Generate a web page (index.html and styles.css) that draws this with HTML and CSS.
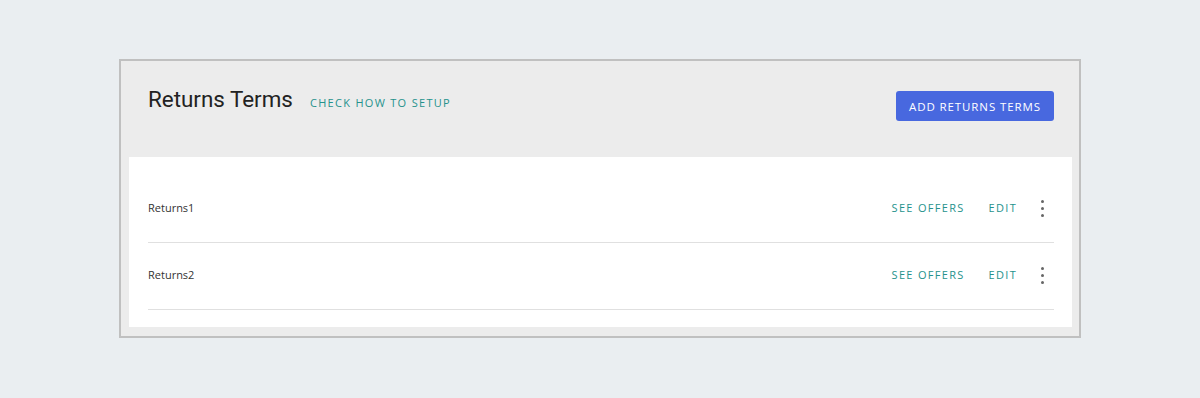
FILE: index.html
```html
<!DOCTYPE html>
<html>
<head>
	<title>Returns Terms</title>
	<meta charset="utf8"/>
	<link rel="stylesheet" href="styles.css">
</head>
<body>
	<div class="panel">
		<div class="panel-header">
			<div class="heading">
				<h1>Returns Terms</h1>
				<a class="link" href="#">Check how to setup</a>
			</div>
			<button class="primary">Add returns terms</button>
		</div>
		<ul class="terms">
			<li class="term">
				<span class="term-name">Returns1</span>
				<div class="actions">
					<a class="link" href="#">See offers</a>
					<a class="link" href="#">Edit</a>
					<span class="more"><i></i><i></i><i></i></span>
				</div>
			</li>
			<li class="term">
				<span class="term-name">Returns2</span>
				<div class="actions">
					<a class="link" href="#">See offers</a>
					<a class="link" href="#">Edit</a>
					<span class="more"><i></i><i></i><i></i></span>
				</div>
			</li>
		</ul>
	</div>
</body>
</html>
```

FILE: styles.css
```css
body {
	background: #eaeef1;
	font-family: "Open Sans", sans-serif;
	margin: 0;
}

.panel {
	background: #ececec;
	border: 2px solid #c0c0c0;
	margin: 59px auto 0;
	width: 958px;
}

.panel-header {
	align-items: flex-start;
	box-sizing: border-box;
	display: flex;
	height: 96px;
	justify-content: space-between;
	padding: 0 25px 0 27px;
}

.heading {
	align-items: baseline;
	display: flex;
	gap: 17px;
	padding-top: 24px;
}

h1 {
	color: #222;
	font-family: Roboto, sans-serif;
	font-size: 22.4px;
	font-weight: 400;
	line-height: 28px;
	margin: 0;
}

.link {
	color: #26928c;
	font-size: 11px;
	letter-spacing: 1.3px;
	text-decoration: none;
	text-transform: uppercase;
}

button.primary {
	background: #4868df;
	border: 0;
	border-radius: 3px;
	color: #fff;
	font-family: inherit;
	font-size: 11.5px;
	height: 30px;
	letter-spacing: 0.9px;
	margin-top: 30px;
	padding: 0 13px;
	text-transform: uppercase;
}

.terms {
	background: #fff;
	list-style: none;
	margin: 0 7px 9px 8px;
	padding: 19px 18px 17px 19px;
}

.term {
	align-items: center;
	border-bottom: 1px solid #e0e0e0;
	box-sizing: border-box;
	display: flex;
	height: 67px;
	justify-content: space-between;
	padding-bottom: 3px;
}

.term-name {
	color: #333;
	font-size: 11px;
}

.actions {
	align-items: center;
	display: flex;
	gap: 24px;
}

.more {
	align-items: center;
	display: flex;
	flex-direction: column;
	gap: 4px;
	margin-left: -11px;
	padding-top: 1px;
	width: 24px;
}

.more i {
	background: #666;
	border-radius: 50%;
	display: block;
	height: 3px;
	width: 3px;
}
```
